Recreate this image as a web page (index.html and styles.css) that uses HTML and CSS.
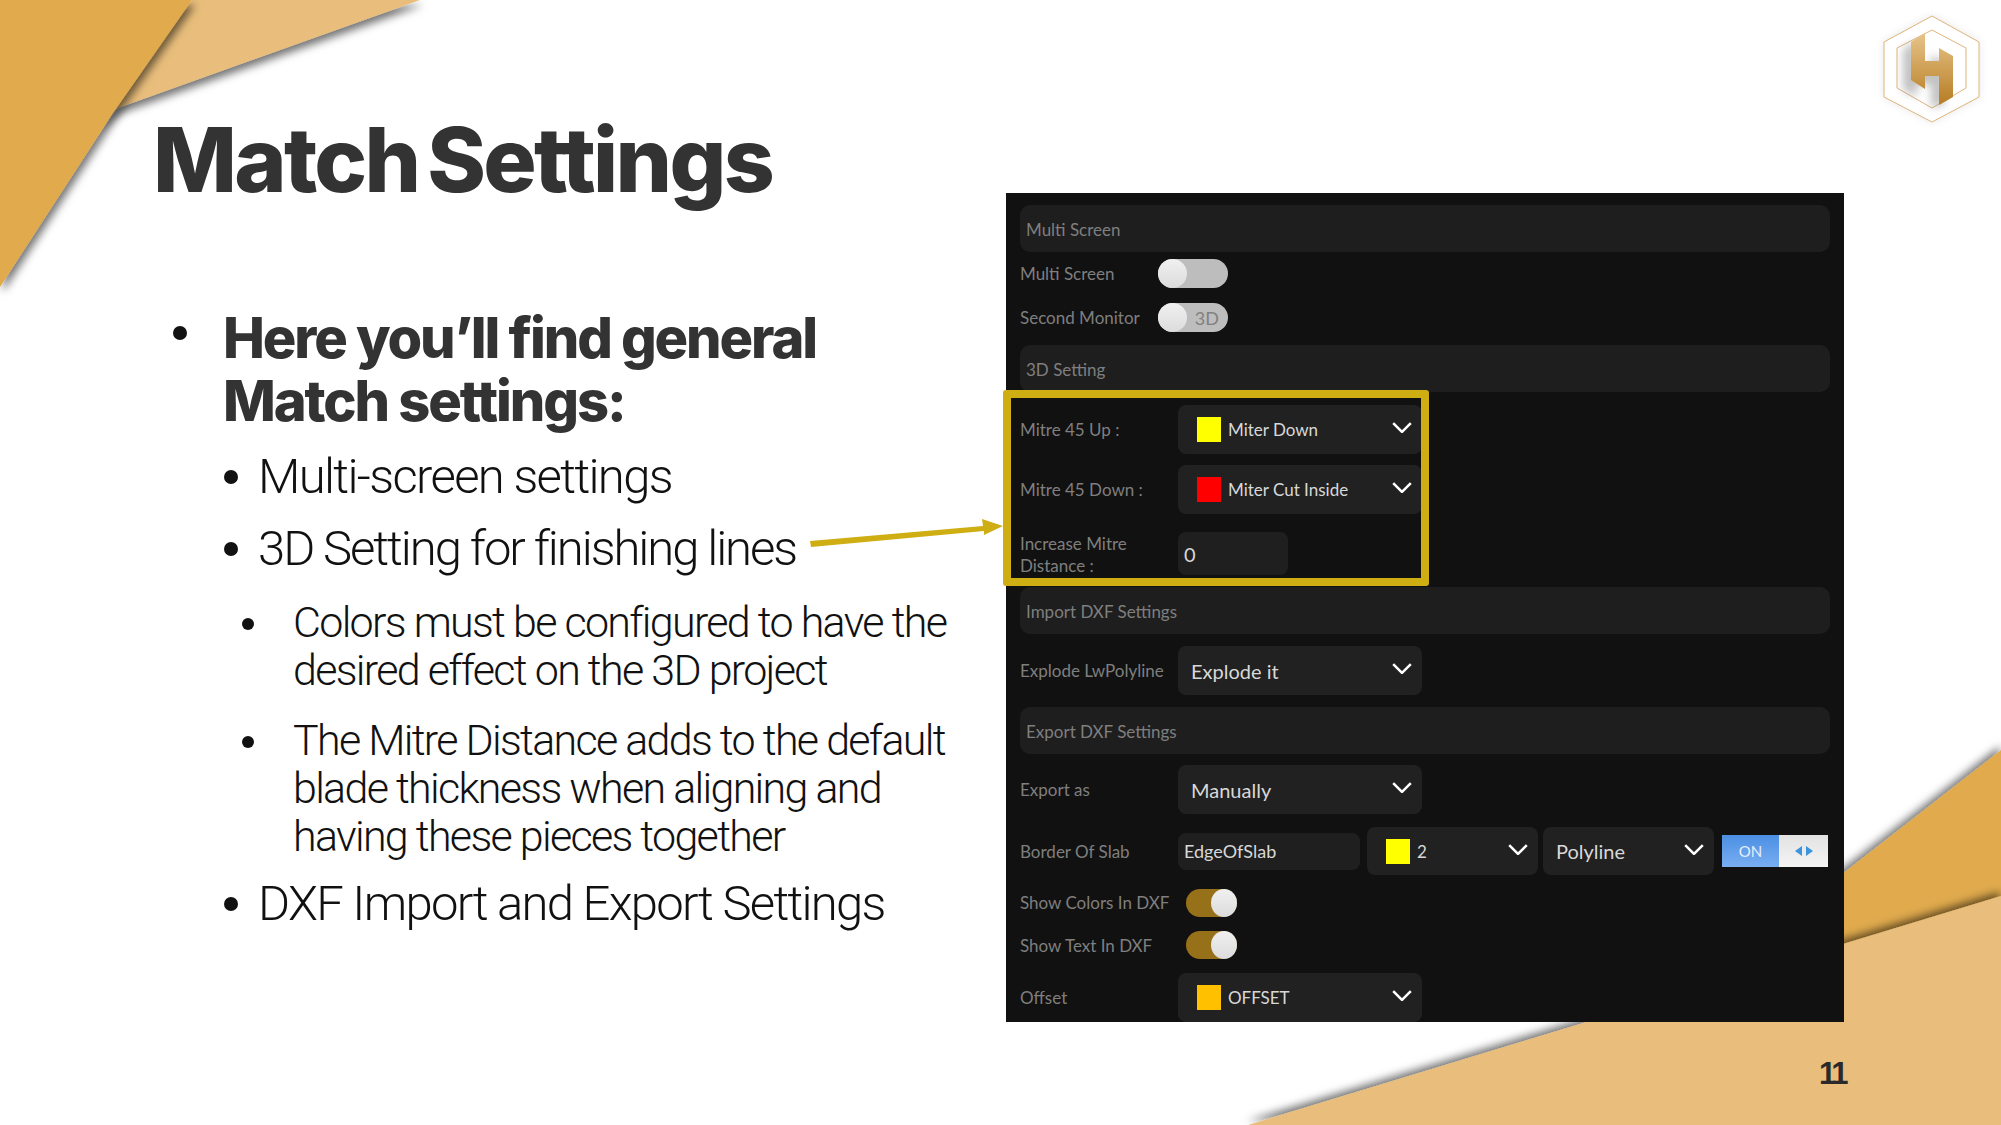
FILE: index.html
```html
<!DOCTYPE html>
<html lang="en">
<head>
<meta charset="utf-8">
<title>Match Settings</title>
<link rel="stylesheet" href="styles.css">
</head>
<body>
<main class="slide">
  <svg class="decor" width="2001" height="1125" viewBox="0 0 2001 1125" aria-hidden="true">
    <defs>
      <filter id="shadeTop" x="-10%" y="-10%" width="120%" height="120%"><feDropShadow dx="-1" dy="-4" stdDeviation="4.5" flood-color="#000" flood-opacity=".55"/></filter>
      <filter id="shadeTL" x="-10%" y="-10%" width="120%" height="120%"><feDropShadow dx="3" dy="5" stdDeviation="4.5" flood-color="#000" flood-opacity=".55"/></filter>
      <filter id="soft" x="-30%" y="-30%" width="160%" height="160%"><feGaussianBlur stdDeviation="4"/></filter>
      <linearGradient id="hfill" x1="0" y1="0" x2="0" y2="1"><stop offset="0" stop-color="#e7c48a"/><stop offset="1" stop-color="#b67c22"/></linearGradient>
    </defs>
    <polygon points="192,0 420,0 118,108 96,125" fill="#e9be7c" filter="url(#shadeTL)"/>
    <polygon points="0,0 192,0 113,113 0,287" fill="#e0aa4d" filter="url(#shadeTL)"/>
    <polygon points="2001,750 1700,985 2001,1000" fill="#e0aa4d" filter="url(#shadeTop)"/>
    <polygon points="2001,896 1248,1125 2001,1125" fill="#e9be7c" filter="url(#shadeTop)"/>
    <g class="logo">
      <polygon points="1932,16 1979,42 1979,97 1932,122 1884,97 1884,42" fill="#999" opacity=".25" filter="url(#soft)"/>
      <polygon points="1932,16 1979,42 1979,97 1932,122 1884,97 1884,42" fill="#fff" stroke="#dfb57c" stroke-width="1"/>
      <polygon points="1932,30 1966,48 1966,88 1932,108 1897,88 1897,48" fill="#fff" stroke="#dfb57c" stroke-width="1"/>
      <polygon points="1903,49 1917,41 1917,68 1931,68 1931,55 1945,62 1945,104 1931,108 1931,84 1917,84 1917,97 1903,90" fill="#777" opacity=".45" filter="url(#soft)"/>
      <polygon points="1911,42 1925,33 1925,61 1939,61 1939,48 1953,56 1953,97 1939,105 1939,76 1925,76 1925,89 1911,80" fill="url(#hfill)"/>
    </g>
    <polygon class="arrow" points="810,541 983,526 982,519 1003,526 984,535 984,531 811,547"/>
  </svg>

  <section class="copy">
    <h1 class="title">Match Settings</h1>
    <ul class="points">
      <li class="lead">Here you’ll find general Match settings:</li>
      <li class="sub sub-first">Multi-screen settings</li>
      <li class="sub sub-second">3D Setting for finishing lines</li>
      <li class="detail detail-first">Colors must be configured to have the desired effect on the 3D project</li>
      <li class="detail detail-second">The Mitre Distance adds to the default blade thickness when aligning and having these pieces together</li>
      <li class="sub sub-last">DXF Import and Export Settings</li>
    </ul>
  </section>

  <section class="panel">
    <div class="band">Multi Screen</div>
    <div class="row toggle-row m7"><span class="label">Multi Screen</span><span class="toggle"><i class="knob"></i></span></div>
    <div class="row toggle-row m15"><span class="label">Second Monitor</span><span class="toggle"><i class="knob"></i><b class="toggle-text">3D</b></span></div>
    <div class="band m13">3D Setting</div>
    <div class="row m13"><span class="label">Mitre 45 Up :</span>
      <div class="select small"><i class="swatch yellow"></i><span>Miter Down</span><svg class="chev" viewBox="0 0 18 10"><path d="M1 1l8 8 8-8"/></svg></div></div>
    <div class="row m11"><span class="label">Mitre 45 Down :</span>
      <div class="select small"><i class="swatch red"></i><span>Miter Cut Inside</span><svg class="chev" viewBox="0 0 18 10"><path d="M1 1l8 8 8-8"/></svg></div></div>
    <div class="row mitre-row m18"><span class="label two-line">Increase Mitre Distance :</span><div class="input short">0</div></div>
    <div class="band m12">Import DXF Settings</div>
    <div class="row m12"><span class="label">Explode LwPolyline</span>
      <div class="select plain"><span>Explode it</span><svg class="chev" viewBox="0 0 18 10"><path d="M1 1l8 8 8-8"/></svg></div></div>
    <div class="band m12">Export DXF Settings</div>
    <div class="row m11"><span class="label">Export as</span>
      <div class="select plain"><span>Manually</span><svg class="chev" viewBox="0 0 18 10"><path d="M1 1l8 8 8-8"/></svg></div></div>
    <div class="row slab-row m13"><span class="label">Border Of Slab</span>
      <div class="input wide">EdgeOfSlab</div>
      <div class="select mini small"><i class="swatch yellow"></i><span>2</span><svg class="chev" viewBox="0 0 18 10"><path d="M1 1l8 8 8-8"/></svg></div>
      <div class="select mini plain poly"><span>Polyline</span><svg class="chev" viewBox="0 0 18 10"><path d="M1 1l8 8 8-8"/></svg></div>
      <div class="switch"><span class="switch-on">ON</span><span class="switch-off"><svg width="18" height="10" viewBox="0 0 18 10"><path d="M7 0v10L0 5zM11 0v10l7-5z"/></svg></span></div>
    </div>
    <div class="row dxf-row m14"><span class="label">Show Colors In DXF</span><span class="toggle gold"><i class="knob"></i></span></div>
    <div class="row dxf-row dxf-second m15"><span class="label">Show Text In DXF</span><span class="toggle gold"><i class="knob"></i></span></div>
    <div class="row m14"><span class="label">Offset</span>
      <div class="select small"><i class="swatch amber"></i><span>OFFSET</span><svg class="chev" viewBox="0 0 18 10"><path d="M1 1l8 8 8-8"/></svg></div></div>
    <div class="highlight"></div>
  </section>

  <div class="page-number">11</div>
</main>
</body>
</html>
```

FILE: styles.css
```css
* { box-sizing: border-box; }
html, body { margin: 0; padding: 0; background: #fff; }
.slide {
  position: relative;
  width: 2001px;
  height: 1125px;
  overflow: hidden;
  display: flex;
  align-items: flex-start;
  padding-left: 153px;
  background: #fff;
}
.decor { position: absolute; left: 0; top: 0; }
.arrow { fill: #cfae14; }

.copy { position: relative; width: 853px; flex: none; color: #111; }
.title {
  margin: 110px 0 0;
  font: 800 89px/100px Inter, "Liberation Sans", Arial, sans-serif;
  letter-spacing: -2.7px;
  word-spacing: -8px;
  color: #333;
}
.points { list-style: none; margin: 0; padding: 0; }
.points li { position: relative; }
.points li::before {
  content: "";
  position: absolute;
  border-radius: 50%;
  background: #111;
}
.lead {
  margin: 97px 0 0 70px;
  width: 640px;
  font: 800 56px/63px Inter, "Liberation Sans", Arial, sans-serif;
  letter-spacing: -2.1px;
  color: #333;
}
.lead::before { left: -50px; top: 19px; width: 14px; height: 14px; }
.sub, .detail { font-family: Roboto, "Liberation Sans", sans-serif; font-weight: 300; }
.sub { margin-left: 105px; font-size: 49px; line-height: 60px; letter-spacing: -2.05px; }
.sub::before { left: -34px; top: 23px; width: 14px; height: 14px; }
.sub-first { margin-top: 14px; letter-spacing: -1.65px; }
.sub-second { margin-top: 12px; }
.detail { margin-left: 140px; width: 680px; font-size: 43px; line-height: 48px; letter-spacing: -1.7px; }
.detail::before { left: -51px; top: 20px; width: 12px; height: 12px; }
.detail-first { margin-top: 19px; }
.detail-second { margin-top: 22px; }
.sub-last { margin-top: 14px; letter-spacing: -1.7px; }

.panel {
  position: relative;
  width: 838px;
  height: 829px;
  flex: none;
  margin-top: 193px;
  padding: 12px 14px 0 14px;
  display: flex;
  flex-direction: column;
  background: #111;
  font-family: Lato, "Open Sans", sans-serif;
  font-size: 17px;
  color: #7f7f7f;
}
.band {
  height: 47px;
  flex: none;
  padding: 2px 0 0 6px;
  display: flex;
  align-items: center;
  background: #1e1e1e;
  border-radius: 10px;
}
.row { display: flex; align-items: center; flex: none; height: 49px; }
.label { width: 158px; flex: none; }
.toggle-row { height: 29px; }
.toggle-row .label { width: 138px; }
.m7 { margin-top: 7px; }
.m11 { margin-top: 11px; }
.m12 { margin-top: 12px; }
.m13 { margin-top: 13px; }
.m14 { margin-top: 14px; }
.m15 { margin-top: 15px; }
.m18 { margin-top: 18px; }

.toggle {
  position: relative;
  width: 70px;
  height: 29px;
  flex: none;
  display: flex;
  align-items: center;
  justify-content: flex-end;
  padding-right: 9px;
  border-radius: 15px;
  background: #bdbdbd;
}
.knob {
  position: absolute;
  left: 0;
  top: 0;
  width: 29px;
  height: 29px;
  border-radius: 50%;
  background: linear-gradient(#f0f0f0, #dcdcdc);
}
.toggle-text { font-weight: 400; font-size: 18px; color: #808080; }
.toggle.gold { width: 51px; height: 28px; background: #97701a; padding: 0; }
.gold .knob { left: auto; right: 0; width: 26px; height: 28px; border-radius: 50%; }
.dxf-row { height: 27px; }
.dxf-second { height: 28px; }
.dxf-row .label { width: 166px; }

.select {
  width: 244px;
  height: 49px;
  flex: none;
  display: flex;
  align-items: center;
  border-radius: 8px;
  background: #212121;
  color: #d8d8d8;
}
.select.small { padding: 0 10px 0 19px; font-size: 17px; }
.select.plain { padding: 0 10px 0 13px; font-size: 20px; }
.chev { width: 20px; height: 11px; margin-left: auto; margin-top: -4px; fill: none; stroke: #fff; stroke-width: 2.3; }
.swatch { width: 24px; height: 25px; margin-right: 7px; flex: none; }
.yellow { background: #ff0; }
.red { background: #f00; }
.amber { background: #ffc000; }

.input {
  display: flex;
  align-items: center;
  border-radius: 8px;
  background: #1f1f1f;
  color: #d8d8d8;
}
.input.short { width: 110px; height: 43px; padding-left: 6px; font-size: 20px; }
.input.wide { width: 182px; height: 37px; padding: 0 6px; font-size: 18px; margin-right: 7px; flex: none; }
.mitre-row { height: 43px; }
.two-line { font-size: 17px; line-height: 22px; align-self: flex-end; margin-bottom: -2px; width: 120px; margin-right: 38px; }
.slab-row { height: 48px; }
.select.mini { width: 171px; height: 48px; }
.poly { margin-left: 5px; }
.switch {
  width: 106px;
  height: 32px;
  margin-left: 8px;
  flex: none;
  display: flex;
  font-size: 15px;
}
.switch-on {
  width: 57px;
  display: flex;
  align-items: center;
  justify-content: center;
  color: #e6eefb;
  background: linear-gradient(#4b8fe3, #79aef2);
}
.switch-off {
  flex: 1;
  display: flex;
  align-items: center;
  justify-content: center;
  background: linear-gradient(#e2e2e2, #f4f4f4);
}
.switch-off svg { fill: #3d94de; }

.highlight {
  position: absolute;
  left: -3px;
  top: 197px;
  width: 426px;
  height: 196px;
  border: 8px solid #cfae14;
  border-radius: 3px;
}
.page-number {
  position: absolute;
  left: 1819px;
  top: 1056px;
  font: 700 31px/36px "Liberation Sans", Arial, sans-serif;
  letter-spacing: -3.2px;
  color: #2a2a2a;
}
```
